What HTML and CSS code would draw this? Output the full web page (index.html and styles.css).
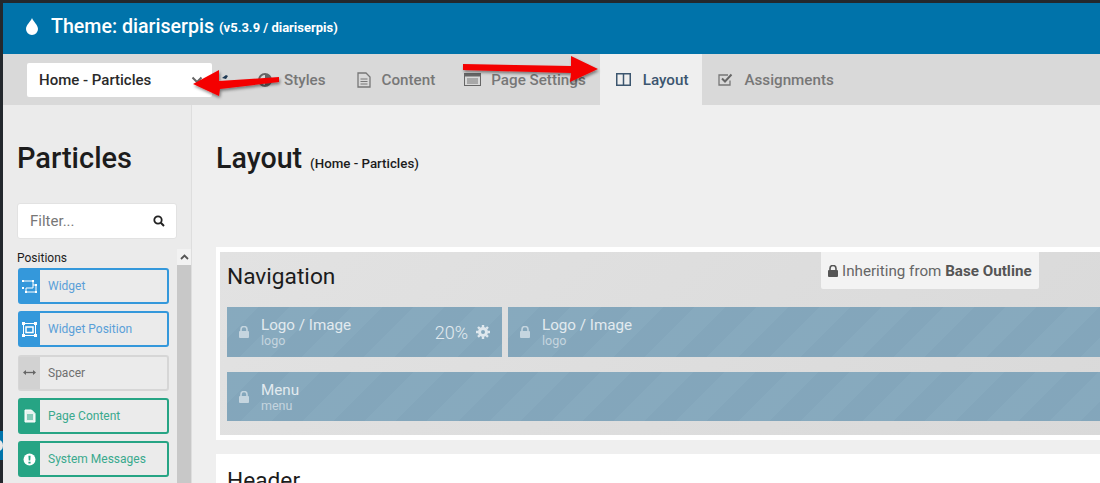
FILE: index.html
```html
<!DOCTYPE html>
<html lang="en">
<head>
    <meta charset="UTF-8">
    <title>Theme: diariserpis</title>
    <link rel="stylesheet" href="styles.css">
</head>
<body>
    <div class="app">
        <header class="top-bar">
            <svg class="drop-icon" width="14" height="17" viewBox="0 0 14 17"><path d="M7 0C8 3 13 7 13 11a6 6 0 0 1-12 0C1 7 6 3 7 0z" fill="#fff"/></svg>
            <h1>Theme: diariserpis</h1>
            <span class="version">(v5.3.9 / diariserpis)</span>
        </header>

        <nav class="tabs">
            <div class="outline-select">
                <span>Home - Particles</span>
                <svg width="12" height="8" viewBox="0 0 12 8"><path d="M1.500 1.500 6 6l4.500-4.500" fill="none" stroke="#666" stroke-width="2"/></svg>
            </div>
            <a class="tab tab-styles">
                <svg width="14" height="14" viewBox="0 0 14 14"><circle cx="7" cy="7" r="6" fill="none" stroke="#666" stroke-width="2"/><path d="M7 1a6 6 0 0 1 0 12z" fill="#666"/></svg>
                <span>Styles</span>
            </a>
            <a class="tab tab-content">
                <svg width="14" height="16" viewBox="0 0 14 16"><path d="M1 1h8l4 4v10H1z" fill="none" stroke="#777" stroke-width="1.300"/><path d="M3.500 7h7M3.500 9.500h7M3.500 12h7" stroke="#777"/></svg>
                <span>Content</span>
            </a>
            <a class="tab tab-settings">
                <svg width="17" height="13" viewBox="0 0 17 13"><rect x=".5" y=".5" width="16" height="12" fill="none" stroke="#666"/><rect x=".5" y=".5" width="16" height="3" fill="#666"/><path d="M3 6h11M3 8h11M3 10h11" stroke="#777"/></svg>
                <span>Page Settings</span>
            </a>
            <a class="tab tab-active">
                <svg width="15" height="13" viewBox="0 0 15 13"><rect x=".75" y=".75" width="13.500" height="11.500" fill="none" stroke="#3c566f" stroke-width="1.500"/><path d="M7.500 1v11" stroke="#3c566f" stroke-width="1.500"/></svg>
                <span>Layout</span>
            </a>
            <a class="tab tab-assign">
                <svg width="15" height="13" viewBox="0 0 15 13"><path d="M12 7.500V12H1V2h9" fill="none" stroke="#777" stroke-width="1.300"/><path d="M4 5.500l3 3 6.500-7" fill="none" stroke="#666" stroke-width="2"/></svg>
                <span>Assignments</span>
            </a>
        </nav>

        <div class="main">
            <aside class="sidebar">
                <h2>Particles</h2>
                <div class="filter">
                    <span>Filter...</span>
                    <svg width="12" height="12" viewBox="0 0 12 12"><circle cx="5" cy="5" r="3.700" fill="none" stroke="#222" stroke-width="1.800"/><path d="M7.800 7.800 11 11" stroke="#222" stroke-width="2"/></svg>
                </div>
                <div class="particle-area">
                    <div class="particle-list">
                        <div class="group-label">Positions</div>
                        <div class="particle blue">
                            <span class="particle-icon"><svg width="17" height="15" viewBox="0 0 17 15"><path d="M2 2h10v7H5v4h10V6h-3" fill="none" stroke="#fff"/><path d="M1 1h2v2H1zM11 1h2v2h-2zM1 8h2v2H1zM4 12h2v2H4zM14 12h2v2h-2zM14 5h2v2h-2z" fill="#fff"/></svg></span>
                            <span class="particle-name">Widget</span>
                        </div>
                        <div class="particle blue">
                            <span class="particle-icon"><svg width="15" height="15" viewBox="0 0 15 15"><rect x="1.500" y="1.500" width="12" height="12" fill="none" stroke="#fff"/><rect x="4" y="5" width="7" height="5.500" fill="none" stroke="#fff" stroke-width="1.500"/><path d="M0 0h3v3H0zM12 0h3v3h-3zM0 12h3v3H0zM12 12h3v3h-3z" fill="#fff"/></svg></span>
                            <span class="particle-name">Widget Position</span>
                        </div>
                        <div class="particle grey">
                            <span class="particle-icon"><svg width="13" height="7" viewBox="0 0 13 7"><path d="M2 3.500h9" stroke="#666" stroke-width="1.300"/><path d="M0 3.500 3 1v5zM13 3.500 10 1v5z" fill="#666"/></svg></span>
                            <span class="particle-name">Spacer</span>
                        </div>
                        <div class="particle green">
                            <span class="particle-icon"><svg width="12" height="14" viewBox="0 0 12 14"><path d="M1 1h6.500L11 4.500V13H1z" fill="#e6f3ef" stroke="#fff"/><path d="M3 6h6M3 8h6M3 10h6" stroke="#26a484"/></svg></span>
                            <span class="particle-name">Page Content</span>
                        </div>
                        <div class="particle green">
                            <span class="particle-icon"><svg width="13" height="13" viewBox="0 0 12 12"><circle cx="6" cy="6" r="5.500" fill="#fff"/><path d="M5 2.500h2l-.3 4.500H5.300zM5 8h2v1.700H5z" fill="#26a484"/></svg></span>
                            <span class="particle-name">System Messages</span>
                        </div>
                    </div>
                    <div class="scrollbar">
                        <div class="scroll-up"><svg width="9" height="6" viewBox="0 0 9 6"><path d="M1 5l3.500-3.500L8 5" fill="none" stroke="#555" stroke-width="1.800"/></svg></div>
                    </div>
                </div>
            </aside>

            <section class="content">
                <div class="page-title">
                    <h2>Layout</h2>
                    <span>(Home - Particles)</span>
                </div>

                <div class="section section-nav">
                    <div class="section-inner">
                        <div class="inherit-note">
                            <svg width="10" height="12" viewBox="0 0 10 12"><path d="M2 6V3.500a3 3 0 0 1 6 0V6" fill="none" stroke="#555" stroke-width="1.600"/><rect y="5" width="10" height="7" rx="1" fill="#555"/></svg>
                            <span>Inheriting from <b>Base Outline</b></span>
                        </div>
                        <h3>Navigation</h3>
                        <div class="row">
                            <div class="block block-small">
                                <svg class="lock" width="10" height="12" viewBox="0 0 10 12"><path d="M2 6V3.500a3 3 0 0 1 6 0V6" fill="none" stroke="#c5d5df" stroke-width="1.600"/><rect y="5" width="10" height="7" rx="1" fill="#c5d5df"/></svg>
                                <div class="block-text">
                                    <div class="block-title">Logo / Image</div>
                                    <div class="block-sub">logo</div>
                                </div>
                                <span class="percent">20%</span>
                                <svg class="gear" width="14" height="14" viewBox="0 0 14 14"><circle cx="7" cy="7" r="3.500" fill="none" stroke="#dfe8ee" stroke-width="3"/><path d="M7 0v14M0 7h14M2 2l10 10M12 2 2 12" stroke="#dfe8ee" stroke-width="2.400" stroke-dasharray="2.400 9.300"/></svg>
                            </div>
                            <div class="block block-wide">
                                <svg class="lock" width="10" height="12" viewBox="0 0 10 12"><path d="M2 6V3.500a3 3 0 0 1 6 0V6" fill="none" stroke="#c5d5df" stroke-width="1.600"/><rect y="5" width="10" height="7" rx="1" fill="#c5d5df"/></svg>
                                <div class="block-text">
                                    <div class="block-title">Logo / Image</div>
                                    <div class="block-sub">logo</div>
                                </div>
                            </div>
                        </div>
                        <div class="row">
                            <div class="block block-wide block-menu">
                                <svg class="lock" width="10" height="12" viewBox="0 0 10 12"><path d="M2 6V3.500a3 3 0 0 1 6 0V6" fill="none" stroke="#c5d5df" stroke-width="1.600"/><rect y="5" width="10" height="7" rx="1" fill="#c5d5df"/></svg>
                                <div class="block-text">
                                    <div class="block-title">Menu</div>
                                    <div class="block-sub">menu</div>
                                </div>
                            </div>
                        </div>
                    </div>
                </div>

                <div class="section section-header">
                    <h3>Header</h3>
                </div>
            </section>
        </div>

        <div class="edge-blob"></div>

        <svg class="arrow" width="1100" height="120" viewBox="0 0 1100 120">
            <defs>
                <filter id="arrowShadow" x="-10%" y="-30%" width="120%" height="170%">
                    <feDropShadow dx="1" dy="2" stdDeviation="1.500" flood-color="#000" flood-opacity=".45"/>
                </filter>
            </defs>
            <path d="M222 78l4-3 2 1-2 3z" fill="#1f3a55"/>
            <path d="M279 77 219 81 219 70 193 84 219 96 220 89 279 82z" fill="#f40000" filter="url(#arrowShadow)"/>
            <path d="M463 64 571 66 571 56 598 69 570 82 571 73 463 70z" fill="#f40000" filter="url(#arrowShadow)"/>
        </svg>
    </div>
</body>
</html>
```

FILE: styles.css
```css
* {
    box-sizing: border-box;
}
html, body {
    margin: 0;
    height: 100%;
    overflow: hidden;
}
body {
    font-family: Roboto, "Liberation Sans", sans-serif;
    background-color: #efefef;
    color: #1c1c1c;
}
.app {
    position: relative;
    height: 483px;
    overflow: hidden;
    padding: 3px 0 0 3px;
    background-color: #23282d;
}
.top-bar {
    display: flex;
    align-items: center;
    height: 51px;
    padding: 0 0 5px 22px;
    background-color: #0073aa;
    color: white;
}
.drop-icon {
    margin-right: 12px;
}
.top-bar h1 {
    margin: 0;
    font-size: 19.600px;
    font-weight: 500;
}
.version {
    margin-left: 5px;
    margin-top: 3px;
    font-size: 13px;
    font-weight: 700;
}
.tabs {
    display: flex;
    align-items: center;
    height: 51px;
    padding-left: 24px;
    background-color: #d9d9d9;
}
.outline-select {
    display: flex;
    align-items: center;
    justify-content: space-between;
    width: 185px;
    height: 34px;
    padding: 0 9px 0 12px;
    background: white;
    border-radius: 2px;
    font-size: 15px;
    font-weight: 500;
    color: #2a2a2a;
}
.tab {
    display: flex;
    align-items: center;
    gap: 12px;
    height: 51px;
    font-size: 15.200px;
    font-weight: 500;
    color: #777;
}
.tab-styles {
    margin-left: 46px;
}
.tab-content {
    margin-left: 31px;
    gap: 11px;
}
.tab-settings {
    margin-left: 29px;
    gap: 10px;
}
.tab-active {
    margin-left: 14px;
    padding: 0 14px 0 16px;
    background-color: #efefef;
    color: #3c566f;
}
.tab-assign {
    margin-left: 16px;
    gap: 11px;
}
.main {
    display: flex;
    height: 378px;
}
.sidebar {
    width: 189px;
    padding: 0 8px 0 15px;
    border-right: 1px solid #dedede;
    background-color: #ebebeb;
}
.sidebar h2 {
    margin: 33px 0 24px -1px;
    font-size: 29px;
    line-height: 41px;
    font-weight: 500;
}
.filter {
    display: flex;
    align-items: center;
    justify-content: space-between;
    width: 160px;
    height: 36px;
    margin-left: -1px;
    padding: 0 11px 0 12px;
    margin-bottom: 10px;
    background: white;
    border: 1px solid #e2e2e2;
    border-radius: 3px;
    font-size: 15px;
    color: #777;
}
.particle-area {
    display: flex;
    justify-content: space-between;
    margin-right: -8px;
}
.particle-list {
    width: 151px;
}
.group-label {
    margin-left: -1px;
    font-size: 12px;
    line-height: 18px;
    margin-bottom: 1px;
}
.particle {
    display: flex;
    align-items: center;
    height: 36px;
    margin-bottom: 7.300px;
    border: 2px solid;
    border-radius: 3px;
    background-color: #ebebeb;
    font-size: 12px;
}
.particle-icon {
    display: flex;
    align-items: center;
    justify-content: center;
    align-self: stretch;
    width: 21px;
    margin-left: -1px;
}
.particle-name {
    margin-left: 8px;
}
.blue {
    border-color: #3498db;
    color: #5a9fd8;
}
.blue .particle-icon {
    background-color: #3498db;
}
.grey {
    border-color: #d6d6d6;
    color: #6f6f6f;
}
.grey .particle-icon {
    background-color: #d2d2d2;
}
.green {
    border-color: #26a484;
    color: #3aa98d;
}
.green .particle-icon {
    background-color: #26a484;
}
.scrollbar {
    width: 14px;
    height: 240px;
    background-color: #c8c8c8;
}
.scroll-up {
    display: flex;
    align-items: center;
    justify-content: center;
    height: 16px;
    background-color: #f2f2f2;
}
.content {
    flex: 1;
    min-width: 0;
    padding: 0 0 0 24px;
    background-color: #efefef;
}
.page-title {
    display: flex;
    align-items: baseline;
    gap: 8px;
    height: 142px;
    padding-top: 35px;
}
.page-title h2 {
    margin: 0;
    font-size: 28.600px;
    line-height: 36px;
    font-weight: 500;
}
.page-title span {
    font-size: 13.300px;
    font-weight: 500;
}
.section {
    background: white;
}
.section-nav {
    width: 900px;
    height: 193px;
    padding: 5px 0 5px 4px;
}
.section-inner {
    position: relative;
    height: 183px;
    padding: 0 0 0 7px;
    background-color: #dcdcdc;
    background-image: linear-gradient(135deg, #e2e2e2, #d9d9d9);
}
.section h3 {
    margin: 0;
    font-size: 22.700px;
    line-height: 50px;
    font-weight: 400;
}
.section-inner h3 {
    height: 55px;
}
.inherit-note {
    position: absolute;
    top: 0;
    left: 601px;
    display: flex;
    align-items: center;
    gap: 4px;
    height: 37px;
    padding: 0 7px;
    background-color: #f3f3f3;
    border-radius: 0 0 2px 2px;
    font-size: 15.200px;
    color: #666;
}
.inherit-note b {
    color: #555;
    font-weight: 700;
}
.row {
    display: flex;
    gap: 6px;
    margin-bottom: 15px;
}
.block {
    display: flex;
    align-items: center;
    height: 50px;
    padding-left: 12px;
    color: #e2eaef;
    background-color: #85a8bd;
    background-image: repeating-linear-gradient(135deg, rgba(255,255,255,.02) 0 22px, rgba(0,0,0,.01) 22px 44px);
}
.block-menu {
    height: 49px;
}
.block-small {
    width: 275px;
}
.block-wide {
    flex: 1;
}
.lock {
    margin-right: 12px;
}
.block-text {
    flex: 1;
}
.block-title {
    font-size: 15.200px;
    line-height: 18px;
}
.block-sub {
    font-size: 12.500px;
    line-height: 14px;
    color: #c5d5df;
}
.percent {
    font-size: 18px;
    font-weight: 300;
    margin-right: 8px;
}
.gear {
    margin-right: 12px;
}
.section-header {
    width: 900px;
    height: 60px;
    margin-top: 14px;
    padding: 2px 0 0 11px;
}
.edge-blob {
    position: absolute;
    left: 0;
    top: 431px;
    width: 3px;
    height: 29px;
    overflow: hidden;
    background-color: #0073aa;
}
.edge-blob::after {
    content: "";
    position: absolute;
    left: -6px;
    top: 9px;
    width: 9px;
    height: 11px;
    border-radius: 50%;
    background-color: #e8e8e8;
}
.arrow {
    position: absolute;
    top: 0;
    left: 0;
}
```
